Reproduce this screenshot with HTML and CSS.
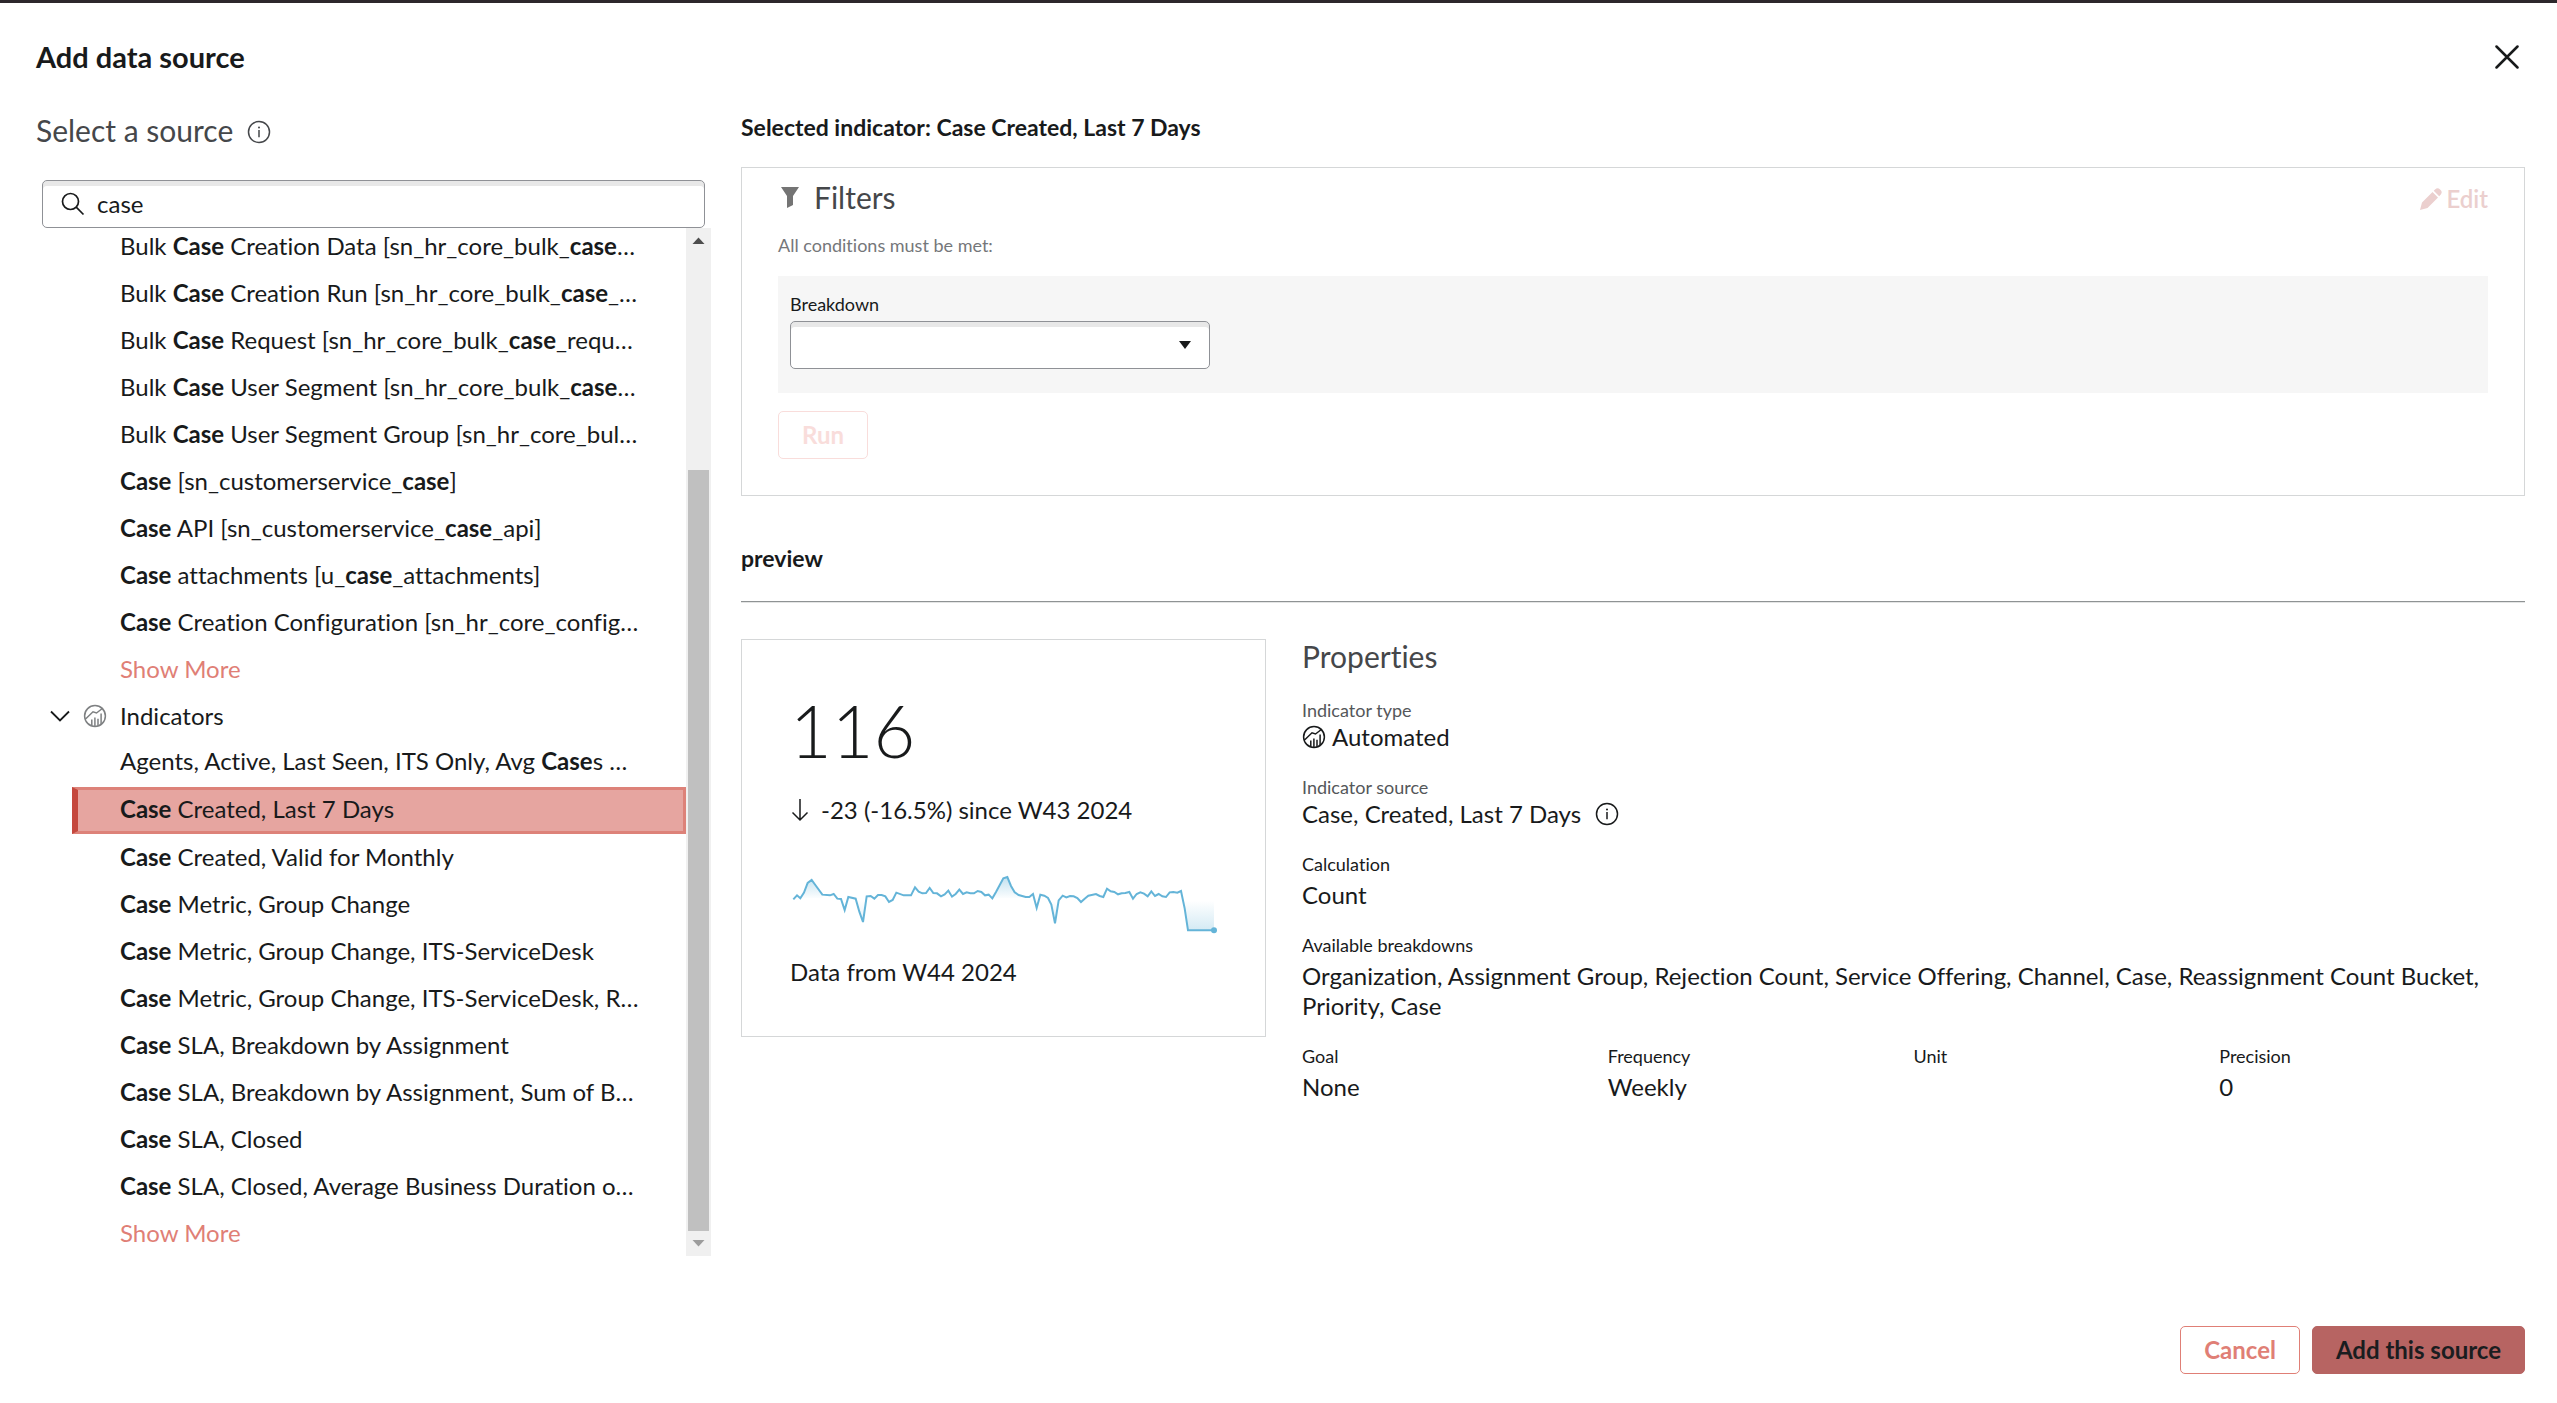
FILE: index.html
```html
<!DOCTYPE html>
<html lang="en">
<head>
<meta charset="utf-8">
<title>Add data source</title>
<link rel="stylesheet" href="styles.css">
</head>
<body>
<svg class="sprite" aria-hidden="true">
  <symbol id="info" viewBox="0 0 24 24">
    <circle cx="12" cy="12" r="10.5" fill="none" stroke="currentColor" stroke-width="1.5"/>
    <circle cx="12" cy="7.4" r="1" fill="currentColor"/>
    <path d="M12 10v7.2" fill="none" stroke="currentColor" stroke-width="1.5"/>
  </symbol>
  <symbol id="indicator" viewBox="0 0 24 24">
    <circle cx="12" cy="12" r="10.4" fill="none" stroke="currentColor" stroke-width="1.5"/>
    <path d="M2.300 15.300L10 7.800l3.500 1.200 6.500-5M8.800 21.500V15.500M11.900 22V13.500M15 21.700V14.800M18.100 20V9.500" fill="none" stroke="currentColor" stroke-width="1.500"/>
  </symbol>
</svg>

<div class="dialog">
  <header class="dialog-header">
    <h1 class="dialog-title">Add data source</h1>
    <button class="icon-button" type="button" aria-label="Close">
      <svg width="24" height="24" viewBox="0 0 24 24"><path d="M1.500 1.500l21 21M22.500 1.500l-21 21" fill="none" stroke="currentColor" stroke-width="2.500" stroke-linecap="round"/></svg>
    </button>
  </header>

  <main class="dialog-body">
    <section class="source">
      <h2 class="section-title source-title">Select a source <svg class="icon icon-title"><use href="#info"/></svg></h2>
      <div class="search">
        <svg class="search-icon" width="24" height="24" viewBox="0 0 24 24"><circle cx="9.500" cy="9.500" r="8" fill="none" stroke="currentColor" stroke-width="1.700"/><path d="M15.200 15.200l7.300 7.300" stroke="currentColor" stroke-width="1.700"/></svg>
        <input class="search-input" type="text" value="case" aria-label="Search sources">
      </div>
      <div class="tree">
        <div class="tree-view">
          <ul class="tree-list">
            <li class="row">Bulk <b>Case</b> Creation Data [sn_hr_core_bulk_<b>case</b>…</li>
            <li class="row">Bulk <b>Case</b> Creation Run [sn_hr_core_bulk_<b>case</b>_…</li>
            <li class="row">Bulk <b>Case</b> Request [sn_hr_core_bulk_<b>case</b>_requ…</li>
            <li class="row">Bulk <b>Case</b> User Segment [sn_hr_core_bulk_<b>case</b>…</li>
            <li class="row">Bulk <b>Case</b> User Segment Group [sn_hr_core_bul…</li>
            <li class="row"><b>Case</b> [sn_customerservice_<b>case</b>]</li>
            <li class="row"><b>Case</b> API [sn_customerservice_<b>case</b>_api]</li>
            <li class="row"><b>Case</b> attachments [u_<b>case</b>_attachments]</li>
            <li class="row"><b>Case</b> Creation Configuration [sn_hr_core_config…</li>
            <li class="row row-short"><a class="more" href="#">Show More</a></li>
          </ul>
          <div class="group">
            <svg class="chevron" width="20" height="12" viewBox="0 0 20 12"><path d="M1 1.500l9 9 9-9" fill="none" stroke="currentColor" stroke-width="1.800"/></svg>
            <svg class="icon icon-muted"><use href="#indicator"/></svg>
            <span>Indicators</span>
          </div>
          <ul class="tree-list">
            <li class="row">Agents, Active, Last Seen, ITS Only, Avg <b>Case</b>s …</li>
            <li class="row row-selected"><b>Case</b> Created, Last 7 Days</li>
            <li class="row"><b>Case</b> Created, Valid for Monthly</li>
            <li class="row"><b>Case</b> Metric, Group Change</li>
            <li class="row"><b>Case</b> Metric, Group Change, ITS-ServiceDesk</li>
            <li class="row"><b>Case</b> Metric, Group Change, ITS-ServiceDesk, R…</li>
            <li class="row"><b>Case</b> SLA, Breakdown by Assignment</li>
            <li class="row"><b>Case</b> SLA, Breakdown by Assignment, Sum of B…</li>
            <li class="row"><b>Case</b> SLA, Closed</li>
            <li class="row"><b>Case</b> SLA, Closed, Average Business Duration o…</li>
            <li class="row row-short"><a class="more" href="#">Show More</a></li>
          </ul>
        </div>
        <div class="scrollbar">
          <svg class="scroll-arrow" viewBox="0 0 25 25"><path d="M6.500 16h12l-6-6.500z" fill="#4d4d4d"/></svg>
          <div class="scroll-space"></div>
          <div class="scroll-thumb"></div>
          <svg class="scroll-arrow" viewBox="0 0 25 25"><path d="M6.500 9h12l-6 6.500z" fill="#9c9c9c"/></svg>
        </div>
      </div>
    </section>

    <section class="details">
      <h2 class="heading">Selected indicator: Case Created, Last 7 Days</h2>
      <div class="filters">
        <div class="filters-head">
          <svg width="24" height="24" viewBox="0 0 24 24"><path d="M3 2h18l-6 9v9l-6 3V11z" fill="#747474"/></svg>
          <h3 class="section-title">Filters</h3>
          <button class="edit" type="button" disabled>
            <svg width="22" height="22" viewBox="0 0 22 22"><path d="M0 22l2-7.500L12.500 4 18 9.500 7.500 20z M13.700 2.800l1.600-1.600c1.500-1.500 3.300-1.200 4.500 0l1 1c1.200 1.200 1.200 3 0 4.200l-1.600 1.900z" fill="currentColor"/></svg>
            Edit
          </button>
        </div>
        <p class="hint">All conditions must be met:</p>
        <div class="condition">
          <label class="label" for="breakdown">Breakdown</label>
          <div class="select-box">
            <select class="select" id="breakdown"><option></option></select>
            <svg class="caret" width="12" height="8" viewBox="0 0 12 8"><path d="M0 0h12L6 8z" fill="#181a1b"/></svg>
          </div>
        </div>
        <button class="button button-run" type="button" disabled>Run</button>
      </div>

      <h2 class="heading preview-heading">preview</h2>
      <hr class="rule">

      <div class="preview">
        <article class="card">
          <div class="score">116</div>
          <div class="delta">
            <svg width="18" height="24" viewBox="0 0 18 24"><path d="M9 1v21M1.500 14.500L9 22l7.500-7.500" fill="none" stroke="currentColor" stroke-width="1.500"/></svg>
            -23 (-16.5%) since W43 2024
          </div>
          <svg class="spark" width="430" height="90" viewBox="33 0 1290 270" role="img" aria-label="Weekly trend">
            <defs>
              <linearGradient id="up" gradientUnits="userSpaceOnUse" x1="0" y1="50" x2="0" y2="118"><stop offset="0" stop-color="#64b4d8" stop-opacity=".4"/><stop offset="1" stop-color="#64b4d8" stop-opacity="0"/></linearGradient>
              <linearGradient id="down" gradientUnits="userSpaceOnUse" x1="0" y1="122" x2="0" y2="212"><stop offset="0" stop-color="#64b4d8" stop-opacity="0"/><stop offset="1" stop-color="#64b4d8" stop-opacity=".28"/></linearGradient>
            </defs>
            <path d="M61 115l11-16 11-30 12-9 32 45v10zM637 115l10-19 23-41 12-4 12 29 12 19 20 16z" fill="url(#up)"/>
            <path d="M1212 122l12 89h78v-89zM232 122l17 65 7-65zM812 122l13 68 8-68z" fill="url(#down)"/>
            <path d="M40 118L51 106 61 115 72 98 83 69 95 60 106 75 127 104 150 106 161 102 172 116 183 117 194 150 205 111 227 116 238 155 249 186 260 109 272 108 283 116 294 105 305 105 316 109 327 126 338 120 349 98 371 106 393 106 405 82 416 95 427 100 438 99 449 84 460 99 471 100 483 109 494 103 505 92 516 110 527 102 538 89 549 102 560 97 571 100 582 100 593 93 604 96 615 106 626 104 637 115 648 96 670 55 682 51 693 78 704 97 716 105 737 111 748 111 759 102 770 144 781 104 793 107 804 114 814 134 825 190 836 121 848 107 859 112 870 108 881 109 892 114 903 126 914 116 925 107 948 102 959 108 970 111 981 86 992 94 1003 96 1014 103 1025 100 1036 99 1048 96 1059 116 1070 102 1081 97 1092 101 1103 109 1114 94 1125 108 1136 102 1147 109 1158 111 1169 97 1180 96 1192 98 1203 93 1214 145 1224 211 1302 211" fill="none" stroke="#64b4d8" stroke-width="6"/>
            <circle cx="1302" cy="211" r="9" fill="#64b4d8"/>
          </svg>
          <div class="period">Data from W44 2024</div>
        </article>

        <section class="properties">
          <h3 class="section-title">Properties</h3>
          <dl class="fields">
            <div class="field field-tight"><dt class="label label-muted">Indicator type</dt><dd class="value"><svg class="icon icon-lead"><use href="#indicator"/></svg>Automated</dd></div>
            <div class="field field-tight"><dt class="label label-muted">Indicator source</dt><dd class="value">Case, Created, Last 7 Days<svg class="icon icon-trail"><use href="#info"/></svg></dd></div>
            <div class="field"><dt class="label">Calculation</dt><dd class="value">Count</dd></div>
            <div class="field"><dt class="label">Available breakdowns</dt><dd class="value">Organization, Assignment Group, Rejection Count, Service Offering, Channel, Case, Reassignment Count Bucket, Priority, Case</dd></div>
          </dl>
          <dl class="facts">
            <div class="field"><dt class="label">Goal</dt><dd class="value">None</dd></div>
            <div class="field"><dt class="label">Frequency</dt><dd class="value">Weekly</dd></div>
            <div class="field"><dt class="label">Unit</dt><dd class="value"></dd></div>
            <div class="field"><dt class="label">Precision</dt><dd class="value">0</dd></div>
          </dl>
        </section>
      </div>
    </section>
  </main>

  <footer class="dialog-footer">
    <button class="button" type="button">Cancel</button>
    <button class="button button-primary" type="button">Add this source</button>
  </footer>
</div>
</body>
</html>
```
FILE: styles.css
```css
* {
  box-sizing: border-box;
}

body {
  margin: 0;
  background: #fff;
  color: #181a1b;
  font: 24px/30px Lato, "Liberation Sans", sans-serif;
  font-variant-ligatures: no-common-ligatures;
}

h1, h2, h3, p, ul, dl, dd {
  margin: 0;
  padding: 0;
}

button, input, select {
  font: inherit;
  color: inherit;
}

.sprite {
  display: none;
}

.icon {
  flex: none;
  width: 24px;
  height: 24px;
}

.dialog {
  display: flex;
  flex-direction: column;
  min-height: 100vh;
  border-top: 3px solid #2d282c;
}

.dialog-header {
  display: flex;
  align-items: center;
  justify-content: space-between;
  padding: 36px 38px 0 36px;
}

.dialog-title {
  font-size: 29px;
  line-height: 36px;
  font-weight: 700;
}

.icon-button {
  display: flex;
  padding: 0;
  border: 0;
  background: none;
}

.dialog-body {
  flex: 1;
  display: grid;
  grid-template-columns: minmax(0, 28fr) minmax(0, 74fr);
  column-gap: 30px;
  padding: 37px 32px 0 36px;
}

.section-title {
  color: #45474a;
  font-size: 30px;
  line-height: 36px;
  font-weight: 400;
}

/* Source picker */

.source {
  display: flex;
  flex-direction: column;
}

.source-title {
  display: flex;
  align-items: center;
  gap: 14px;
}

.icon-title {
  margin-top: 4px;
}

.search {
  display: flex;
  align-items: center;
  gap: 12px;
  height: 48px;
  margin: 32px 6px 0;
  padding: 0 18px;
  border: 1px solid #8f9196;
  border-radius: 5px;
  box-shadow: inset 0 5px #e8e8e8;
}

.search-icon {
  flex: none;
}

.search-input {
  flex: 1;
  min-width: 0;
  padding: 0;
  border: 0;
  outline: 0;
  background: none;
}

.tree {
  flex: 1;
  display: flex;
}

.tree-view {
  flex: 1;
  min-width: 0;
  overflow: hidden;
}

.tree-list {
  list-style: none;
}

/* The list is scrolled slightly past the top of its first row. */
.tree-list:first-child {
  margin-top: -4px;
}

.row {
  height: 47px;
  margin-left: 36px;
  padding: 0 0 4px 42px;
  border: 3px solid transparent;
  border-left-width: 6px;
  line-height: 37px;
  white-space: nowrap;
}

.row-short {
  height: 45px;
}

.row-selected {
  margin-top: 1px;
  margin-bottom: 1px;
  border-color: #dd8279;
  border-left-color: #c5483e;
  background: #e6a5a0;
}

.more {
  color: #e07f76;
  text-decoration: none;
}

.group {
  display: flex;
  align-items: center;
  height: 47px;
  padding-left: 14px;
}

.chevron {
  margin-right: 13px;
}

.icon-muted {
  margin-right: 13px;
  color: #7e8082;
}

.scrollbar {
  display: flex;
  flex-direction: column;
  width: 25px;
  background: #f0f0f0;
}

.scroll-arrow {
  width: 25px;
  height: 25px;
}

.scroll-space {
  flex: 217;
}

.scroll-thumb {
  flex: 761;
  margin: 0 2px;
  background: #c0c0c0;
}

/* Indicator details */

.heading {
  font-size: 23px;
  line-height: 30px;
  font-weight: 700;
}

.filters {
  margin-top: 25px;
  padding: 11px 36px 36px;
  border: 1px solid #d5d7d8;
}

.filters-head {
  display: flex;
  align-items: center;
  gap: 12px;
}

.edit {
  display: flex;
  align-items: center;
  gap: 4px;
  margin-left: auto;
  padding: 4px 0 0;
  border: 0;
  background: none;
  color: #ebcfce;
  font-weight: 600;
}

.hint {
  margin-top: 18px;
  color: #75777a;
  font-size: 18px;
  line-height: 24px;
}

.condition {
  margin-top: 19px;
  padding: 17px 12px 24px;
  background: #f6f6f6;
}

.label {
  display: block;
  font-size: 18px;
  line-height: 22px;
}

.label-muted {
  color: #55575a;
}

.select-box {
  display: grid;
  align-items: center;
  width: 420px;
  max-width: 100%;
  margin-top: 6px;
}

.select {
  grid-area: 1 / 1;
  width: 100%;
  height: 48px;
  border: 1px solid #8f9196;
  border-radius: 5px;
  background: #fff;
  box-shadow: inset 0 5px #e8e8e8;
  appearance: none;
}

.caret {
  grid-area: 1 / 1;
  justify-self: end;
  margin-right: 19px;
  pointer-events: none;
}

.button {
  height: 48px;
  padding: 0 23px 1px;
  border: 1px solid #e07f76;
  border-radius: 5px;
  background: #fff;
  color: #e07f76;
  font-weight: 700;
}

.button-run {
  margin-top: 18px;
  border-color: #f9dddb;
  color: #f9dddb;
}

.button-primary {
  border-color: #b76462;
  background: #b76462;
  color: #1a1d1f;
}

.preview-heading {
  margin-top: 47px;
}

.rule {
  height: 2px;
  margin: 28px 0 36px;
  border: 0;
  border-top: 1px solid #8f9394;
  border-bottom: 1px solid #e4e5e5;
}

.preview {
  display: grid;
  grid-template-columns: 525px minmax(0, 1fr);
  column-gap: 36px;
  align-items: start;
}

.card {
  padding: 46px 44px 49px 48px;
  border: 1px solid #d5d7d8;
}

.score {
  font-size: 72px;
  line-height: 88px;
  font-weight: 300;
}

.delta {
  display: flex;
  align-items: center;
  gap: 12px;
  margin-top: 21px;
  padding-left: 1px;
}

.spark {
  display: block;
  margin: 35px 0 7px 1px;
}

.properties {
  margin-top: -1px;
}

.fields {
  margin-top: 25px;
}

.field {
  margin-bottom: 24px;
}

.value {
  display: flex;
  align-items: center;
  margin-top: 5px;
}

.field-tight .value {
  margin-top: 1px;
}

.icon-lead {
  margin-right: 6px;
}

.icon-trail {
  margin-left: 14px;
}

.facts {
  display: grid;
  grid-template-columns: repeat(4, 1fr);
}

.dialog-footer {
  display: flex;
  justify-content: flex-end;
  gap: 12px;
  padding: 70px 32px 29px;
}
```
